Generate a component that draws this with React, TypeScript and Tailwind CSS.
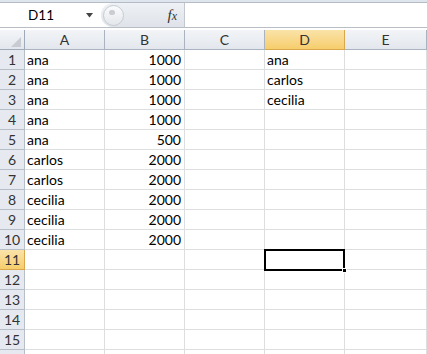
import React from "react"

const cols = ["A", "B", "C", "D", "E"]

const data: Record<number, { a?: string; b?: string; d?: string }> = {
  1: { a: "ana", b: "1000", d: "ana" },
  2: { a: "ana", b: "1000", d: "carlos" },
  3: { a: "ana", b: "1000", d: "cecilia" },
  4: { a: "ana", b: "1000" },
  5: { a: "ana", b: "500" },
  6: { a: "carlos", b: "2000" },
  7: { a: "carlos", b: "2000" },
  8: { a: "cecilia", b: "2000" },
  9: { a: "cecilia", b: "2000" },
  10: { a: "cecilia", b: "2000" },
}

const rows = Array.from({ length: 16 }, (_, i) => i + 1)

export default function App() {
  return (
    <div
      className="relative h-[354px] w-[427px] overflow-hidden bg-white text-[14px] text-black"
      style={{ fontFamily: "Lato, 'Liberation Sans', sans-serif" }}
    >
      {/* ribbon edge */}
      <div className="h-[3px] border-b border-[#b6bcc6] bg-[#dfe5ed]" />

      {/* formula bar */}
      <div className="flex h-[25px] border-b border-[#b9bec6] bg-white">
        <div className="flex w-[101px] items-center">
          <span className="w-[82px] text-center text-[13.5px]">D11</span>
          <svg width="8" height="5" viewBox="0 0 8 5" className="ml-[4px]">
            <path d="M0 0h7L3.5 4.5z" fill="#444" />
          </svg>
        </div>
        <div className="flex w-[84px] items-center rounded-l-full border-r border-[#c3c8cf] bg-gradient-to-b from-[#eef1f5] to-[#dfe3e9] pl-[2px]">
          <div className="h-[21px] w-[21px] rounded-full border border-[#c8ccd2] bg-gradient-to-b from-[#fafbfc] to-[#e4e7eb]">
            <div className="ml-[5px] mt-[4px] h-[5px] w-[6px] rounded-full bg-[#c9ccd1]" />
          </div>
          <span
            className="ml-auto mr-[7px] text-[15px] italic text-[#333]"
            style={{ fontFamily: "'Liberation Serif', serif" }}
          >
            f<span className="text-[12px]">x</span>
          </span>
        </div>
        <div className="flex-1" />
      </div>

      <div className="h-[2px] bg-white" />

      {/* grid */}
      <div className="grid grid-cols-[25px_80px_80px_80px_80px_82px]">
        {/* header row */}
        <div className="relative h-[20px] border-r border-b border-[#9eaab8] bg-gradient-to-b from-[#f3f5f8] to-[#e3e7ed]">
          <svg width="10" height="10" viewBox="0 0 10 10" className="absolute bottom-[2px] right-[3px]">
            <path d="M10 0v10H0z" fill="#c8ccd2" />
          </svg>
        </div>
        {cols.map((c) => (
          <div
            key={c}
            className={
              c === "D"
                ? "flex h-[20px] items-center justify-center border-r border-b border-[#d9a84a] bg-gradient-to-b from-[#fae3a8] to-[#f6cd6b] text-[#333]"
                : "flex h-[20px] items-center justify-center border-r border-b border-[#aab4c0] bg-gradient-to-b from-[#f2f4f7] to-[#e3e7ed] text-[#333]"
            }
          >
            {c}
          </div>
        ))}

        {rows.map((r) => {
          const d = data[r] ?? {}
          const sel = r === 11
          return (
            <React.Fragment key={r}>
              <div
                className={
                  sel
                    ? "flex h-[20px] items-center justify-center border-r border-b border-[#d9a84a] bg-gradient-to-b from-[#fae3a8] to-[#f6cd6b] text-[#333]"
                    : "flex h-[20px] items-center justify-center border-r border-b border-[#b6bec8] bg-[#e6eaf0] text-[#333]"
                }
              >
                {r < 16 ? r : null}
              </div>
              <div className="flex h-[20px] items-center border-r border-b border-[#dcdedf] pl-[2px]">{d.a}</div>
              <div className="flex h-[20px] items-center justify-end border-r border-b border-[#dcdedf] pr-[3px]">{d.b}</div>
              <div className="h-[20px] border-r border-b border-[#dcdedf]" />
              <div className="flex h-[20px] items-center border-r border-b border-[#dcdedf] pl-[2px]">{d.d}</div>
              <div className="h-[20px] border-r border-b border-[#dcdedf]" />
            </React.Fragment>
          )
        })}
      </div>

      {/* active cell D11 */}
      <div className="pointer-events-none absolute left-[264px] top-[249px] h-[22px] w-[81px] border-2 border-black" />
      <div className="pointer-events-none absolute left-[342px] top-[268px] h-[5px] w-[5px] border border-white bg-black" />
    </div>
  )
}
